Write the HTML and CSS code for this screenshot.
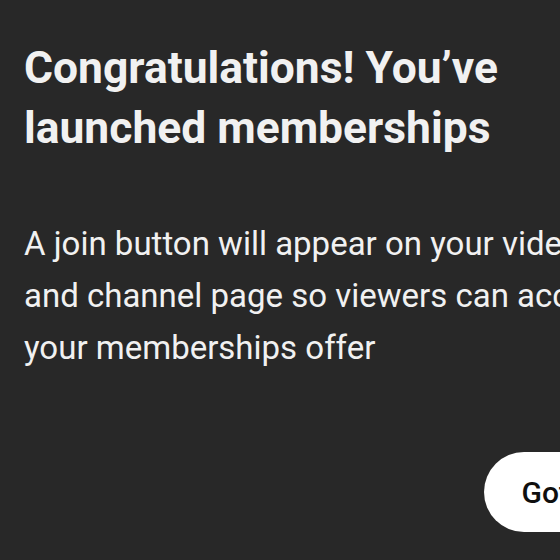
FILE: index.html
```html
<!DOCTYPE html>
<html lang="en">
<head>
    <meta charset="UTF-8">
    <meta name="viewport" content="width=device-width, initial-scale=1.0">
    <title>Memberships launched</title>
    <link rel="stylesheet" href="styles.css">
</head>
<body>
    <div class="dialog">
        <h1 class="dialog-title">Congratulations! You’ve<br>launched memberships</h1>
        <p class="dialog-text">A join button will appear on your videos<br>and channel page so viewers can access<br>your memberships offer</p>
        <div class="dialog-actions">
            <button class="btn-primary">Got it</button>
        </div>
    </div>
</body>
</html>
```

FILE: styles.css
```css
body {
    margin: 0;
    padding: 0;
    background: #282828;
    font-family: Roboto, "Liberation Sans", Arial, sans-serif;
    overflow: hidden;
}
.dialog {
    width: 607px;
    padding: 38px 24px;
    color: #f1f1f1;
}
.dialog-title {
    margin: 0;
    font-size: 44.4px;
    line-height: 60px;
    font-weight: 700;
    white-space: nowrap;
}
.dialog-text {
    margin: 60px 0 0;
    font-size: 33px;
    line-height: 52px;
    font-weight: 400;
    white-space: nowrap;
}
.dialog-actions {
    margin-top: 78px;
    display: flex;
    justify-content: flex-end;
}
.btn-primary {
    height: 80px;
    padding: 0 37px;
    border: none;
    border-radius: 40px;
    background: #fff;
    color: #0f0f0f;
    font-family: inherit;
    font-size: 30px;
    font-weight: 500;
    cursor: pointer;
}
```
